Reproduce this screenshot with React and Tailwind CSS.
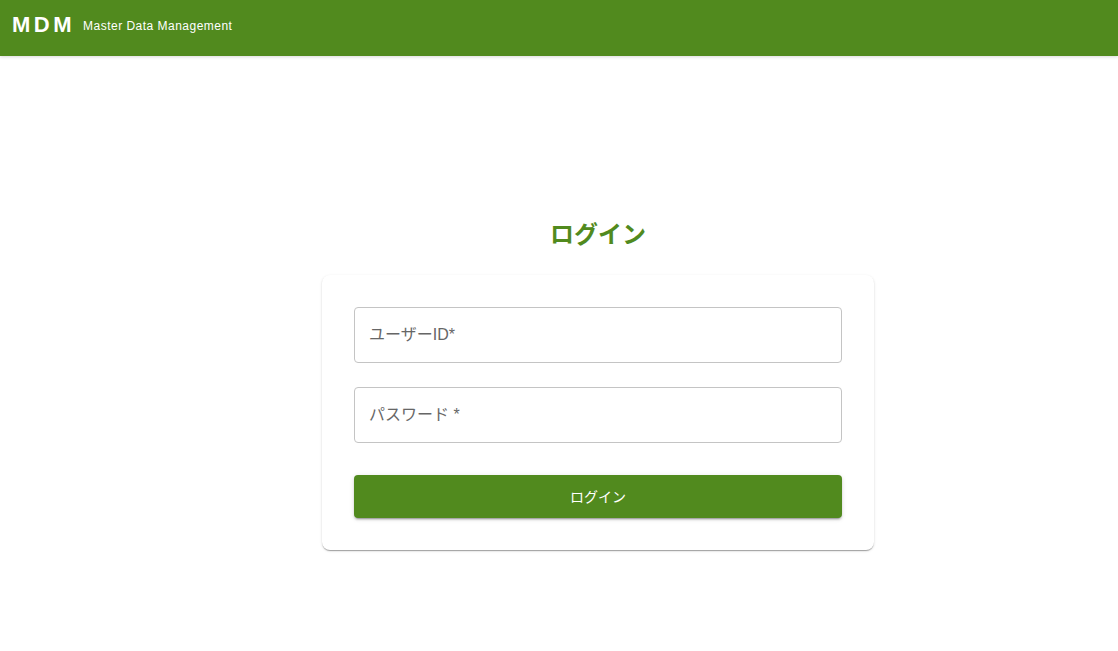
const App = () => {
  return (
    <div className="min-h-screen bg-white" style={{ fontFamily: '"Liberation Sans", "Noto Sans CJK JP", sans-serif' }}>
      {/* Header */}
      <header className="h-14 bg-[#518a1e] flex items-start pt-[9px] px-3 shadow-[0_1px_3px_0_rgba(0,0,0,0.15)]">
        <span className="text-white text-[22px] font-bold tracking-[0.16em] leading-8">MDM</span>
        <span className="text-white text-xs ml-2 tracking-[0.04em] leading-8 mt-px">Master Data Management</span>
      </header>

      {/* Login */}
      <main className="flex flex-col items-center pt-[163px] pl-[78px]">
        <h1 className="text-[#518a1e] text-2xl font-bold leading-8 mb-6">ログイン</h1>
        <div className="w-[552px] bg-white rounded-lg p-8 shadow-[0_2px_1px_-1px_rgba(0,0,0,0.2),0_1px_1px_0_rgba(0,0,0,0.14),0_1px_3px_0_rgba(0,0,0,0.12)]">
          <div className="flex flex-col gap-6">
            <div className="h-14 border border-[#c4c4c4] rounded flex items-center px-3.5">
              <span className="text-[#666] text-base">ユーザーID*</span>
            </div>
            <div className="h-14 border border-[#c4c4c4] rounded flex items-center px-3.5">
              <span className="text-[#666] text-base">パスワード *</span>
            </div>
          </div>
          <button className="mt-8 w-full h-[43px] bg-[#518a1e] text-white text-sm rounded flex items-center justify-center shadow-[0_3px_1px_-2px_rgba(0,0,0,0.2),0_2px_2px_0_rgba(0,0,0,0.14),0_1px_5px_0_rgba(0,0,0,0.12)]">
            ログイン
          </button>
        </div>
      </main>
    </div>
  );
};

export default App;
